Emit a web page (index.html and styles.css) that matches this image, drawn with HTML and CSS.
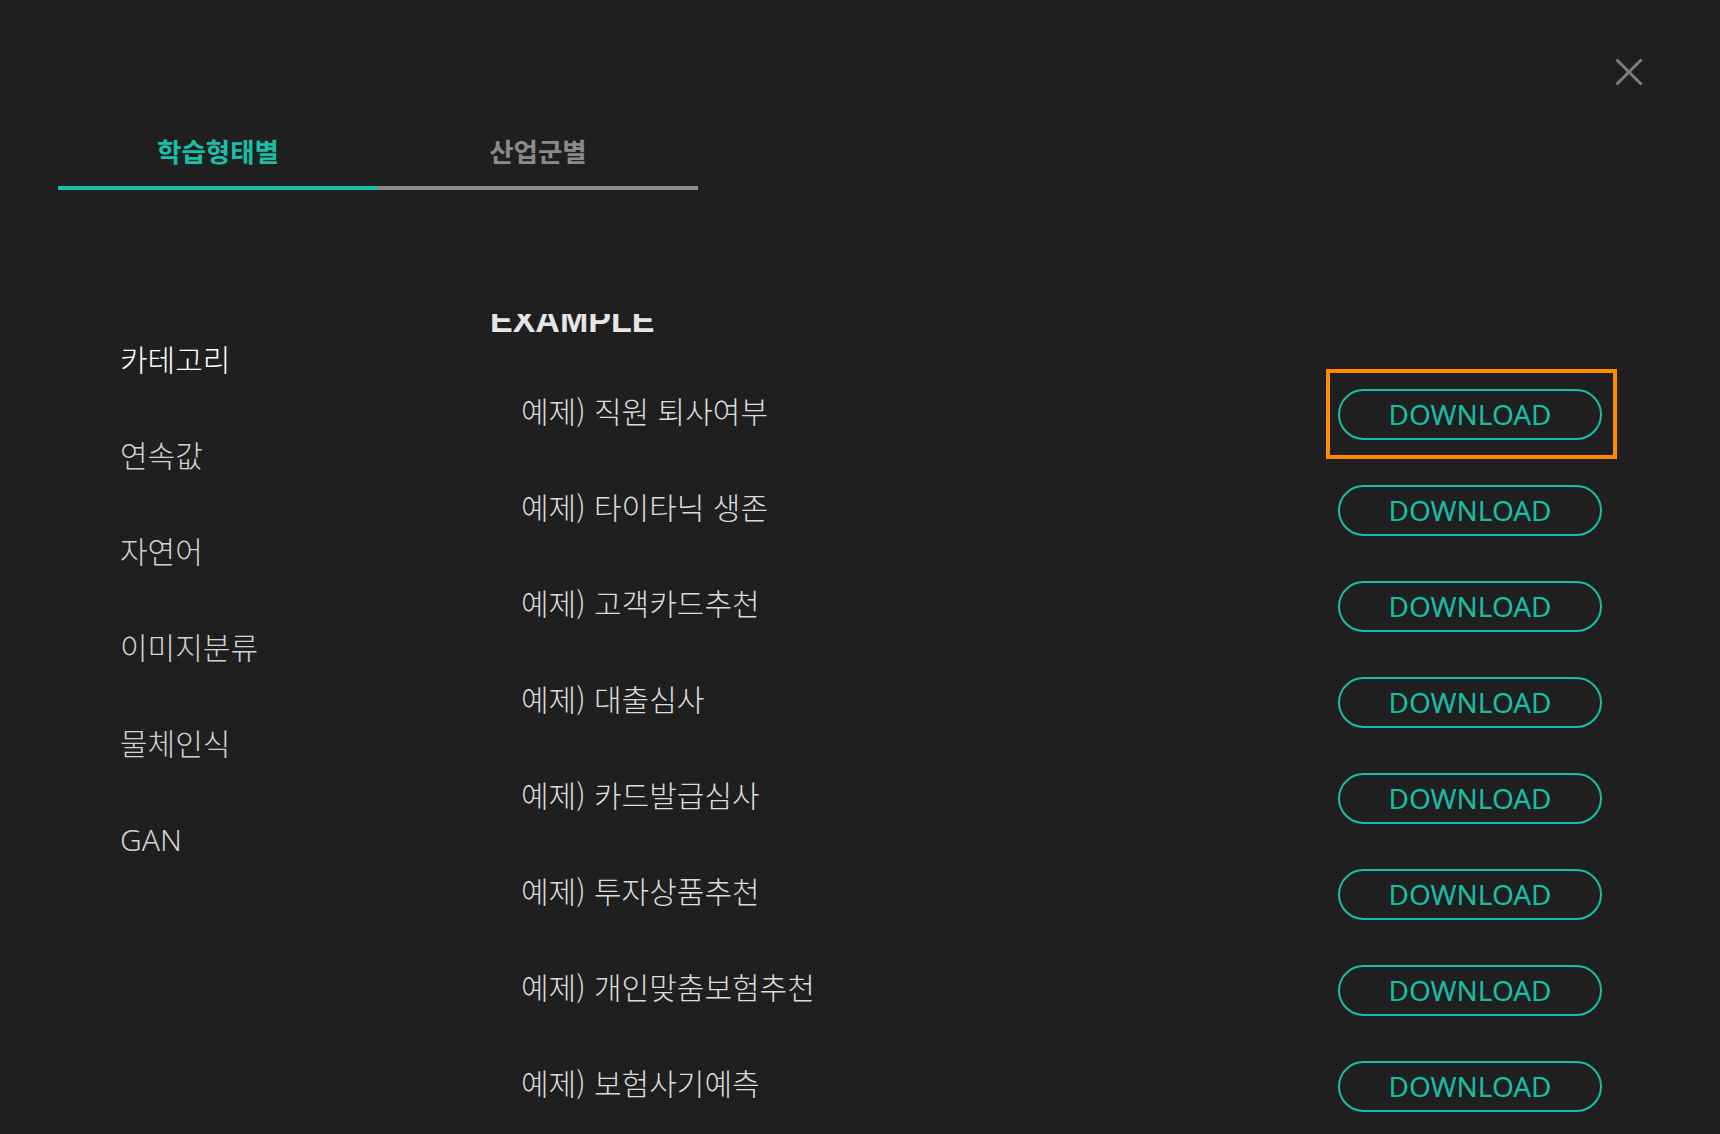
FILE: index.html
```html
<!DOCTYPE html>
<html lang="ko">
<head>
<meta charset="utf-8">
<title>Example Download</title>
<link rel="stylesheet" href="styles.css">
</head>
<body>
<div class="modal">
  <div class="topbar">
    <button class="close-btn" aria-label="닫기">
      <svg width="28" height="28" viewBox="0 0 28 28"><path d="M1.5 1.5 L26.5 26.5 M26.5 1.5 L1.5 26.5" stroke="#7d7d7d" stroke-width="3" fill="none"/></svg>
    </button>
  </div>
  <div class="tabs">
    <div class="tab active">학습형태별</div>
    <div class="tab">산업군별</div>
  </div>
  <div class="main">
    <ul class="nav">
      <li class="nav-item current">카테고리</li>
      <li class="nav-item">연속값</li>
      <li class="nav-item">자연어</li>
      <li class="nav-item">이미지분류</li>
      <li class="nav-item">물체인식</li>
      <li class="nav-item">GAN</li>
    </ul>
    <div class="list">
      <h2 class="list-title">EXAMPLE</h2>
      <div class="row"><span class="row-label">예제) 직원 퇴사여부</span><div class="dl-cell focused"><button class="dl-btn">DOWNLOAD</button></div></div>
      <div class="row"><span class="row-label">예제) 타이타닉 생존</span><div class="dl-cell"><button class="dl-btn">DOWNLOAD</button></div></div>
      <div class="row"><span class="row-label">예제) 고객카드추천</span><div class="dl-cell"><button class="dl-btn">DOWNLOAD</button></div></div>
      <div class="row"><span class="row-label">예제) 대출심사</span><div class="dl-cell"><button class="dl-btn">DOWNLOAD</button></div></div>
      <div class="row"><span class="row-label">예제) 카드발급심사</span><div class="dl-cell"><button class="dl-btn">DOWNLOAD</button></div></div>
      <div class="row"><span class="row-label">예제) 투자상품추천</span><div class="dl-cell"><button class="dl-btn">DOWNLOAD</button></div></div>
      <div class="row"><span class="row-label">예제) 개인맞춤보험추천</span><div class="dl-cell"><button class="dl-btn">DOWNLOAD</button></div></div>
      <div class="row"><span class="row-label">예제) 보험사기예측</span><div class="dl-cell"><button class="dl-btn">DOWNLOAD</button></div></div>
    </div>
  </div>
</div>
</body>
</html>
```

FILE: styles.css
```css
html, body {
  margin: 0;
  padding: 0;
  height: 100%;
  overflow: hidden;
  background: #1f1f1f;
}

body {
  font-family: "Noto Sans", "Noto Sans CJK KR", sans-serif;
  color: #dedede;
}

.modal {
  height: 1134px;
  display: flex;
  flex-direction: column;
}

.topbar {
  display: flex;
  justify-content: flex-end;
  padding: 58px 77px 0 0;
  height: 28px;
}

.close-btn {
  width: 28px;
  height: 28px;
  padding: 0;
  border: 0;
  background: none;
  display: block;
}

.close-btn svg {
  display: block;
}

.tabs {
  display: flex;
  margin: 47px 0 0 58px;
  width: 640px;
}

.tab {
  flex: 1 1 0;
  text-align: center;
  font-family: "Noto Sans CJK KR", sans-serif;
  font-weight: 700;
  font-size: 26.5px;
  line-height: 36px;
  padding-bottom: 17px;
  color: #8a8a8a;
  border-bottom: 4px solid #8a8a8a;
}

.tab.active {
  color: #18bea8;
  border-bottom-color: #18bea8;
}

.main {
  display: flex;
  margin-top: 122px;
  flex: 1 1 auto;
  min-height: 0;
}

.nav {
  list-style: none;
  margin: 0;
  padding: 0 0 0 120px;
  flex: 0 0 370px;
}

.nav-item {
  height: 96px;
  line-height: 96px;
  font-family: "Noto Sans", "Noto Sans CJK KR", sans-serif;
  font-weight: 300;
  font-size: 30px;
  color: #d2d2d2;
}

.nav-item.current {
  color: #ffffff;
}

.list {
  width: 1127px;
  overflow: hidden;
  margin-top: 2px;
}

.list-title {
  margin: -14px 0 26px 0;
  font-family: "Liberation Sans", Arial, sans-serif;
  font-weight: 700;
  font-size: 34px;
  line-height: 40px;
  color: #e6e6e6;
}

.row {
  height: 96px;
  display: flex;
  align-items: center;
  justify-content: space-between;
}

.row-label {
  padding: 0 0 8px 31px;
  font-family: "Noto Sans CJK KR", sans-serif;
  font-weight: 300;
  font-size: 30px;
  color: #dcdcdc;
}

.dl-cell {
  box-sizing: border-box;
  width: 291px;
  height: 90px;
  border: 4px solid transparent;
  display: flex;
  align-items: center;
  padding-left: 8px;
}

.dl-cell.focused {
  border-color: #ff8c00;
}

.dl-btn {
  box-sizing: border-box;
  width: 264px;
  height: 51px;
  border: 2px solid #18bea8;
  border-radius: 26px;
  background: transparent;
  color: #18bea8;
  font-family: "Noto Sans", sans-serif;
  font-size: 28px;
  line-height: 1;
  padding: 0;
}
```
